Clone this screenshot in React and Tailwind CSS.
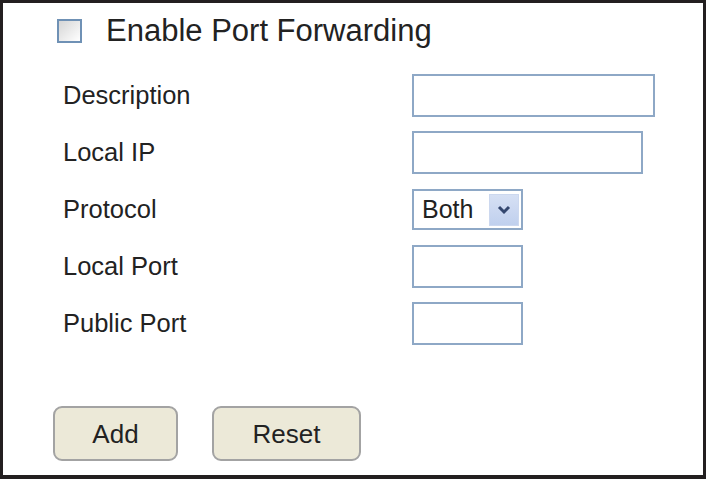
export default function App() {
  const rows = [
    { label: 'Description', w: 'w-[243px]' },
    { label: 'Local IP', w: 'w-[231px]' },
    { label: 'Protocol', select: true },
    { label: 'Local Port', w: 'w-[111px]' },
    { label: 'Public Port', w: 'w-[111px]' },
  ];

  return (
    <div className="w-[706px] h-[479px] bg-white border-[#231f20] border-t-[3px] border-l-[3px] border-r-[3px] border-b-[4px] text-[#222] font-['Liberation_Sans',Arial,sans-serif] overflow-hidden">
      {/* Enable checkbox */}
      <div className="flex items-center h-[31px] mt-[12px] ml-[54px]">
        <div className="w-[25px] h-[24px] border-2 border-[#6f91b5] bg-linear-to-br from-[#d6d6d6] to-white" />
        <span className="ml-[24px] text-[31px] leading-none">Enable Port Forwarding</span>
      </div>

      {/* Fields */}
      <div className="flex flex-col gap-[14px] mt-[28px] ml-[60px]">
        {rows.map((r) => (
          <div key={r.label} className="flex items-center h-[43px]">
            <span className="w-[349px] text-[25.5px] leading-none">{r.label}</span>
            {r.select ? (
              <div className="flex items-center justify-between w-[111px] h-[41px] border-2 border-[#8ea8c6] pl-[8px] pr-[2px]">
                <span className="text-[25px] leading-none">Both</span>
                <div className="flex items-center justify-center w-[30px] h-[32px] bg-linear-to-b from-[#d6e0f4] to-[#c0d0ee] border border-[#ccd8ef]">
                  <svg width="14" height="10" viewBox="0 0 14 10">
                    <polyline points="2,2 7,7 12,2" fill="none" stroke="#34476f" strokeWidth="3" />
                  </svg>
                </div>
              </div>
            ) : (
              <div className={`${r.w} h-[43px] border-2 border-[#8ea8c6] bg-white`} />
            )}
          </div>
        ))}
      </div>

      {/* Buttons */}
      <div className="flex gap-[34px] mt-[61px] ml-[50px]">
        <button className="w-[125px] h-[55px] bg-[#ece9d8] border-2 border-[#a3a3a3] rounded-[9px] text-[26px] leading-none text-[#222]">
          Add
        </button>
        <button className="w-[149px] h-[55px] bg-[#ece9d8] border-2 border-[#a3a3a3] rounded-[9px] text-[26px] leading-none text-[#222]">
          Reset
        </button>
      </div>
    </div>
  );
}
